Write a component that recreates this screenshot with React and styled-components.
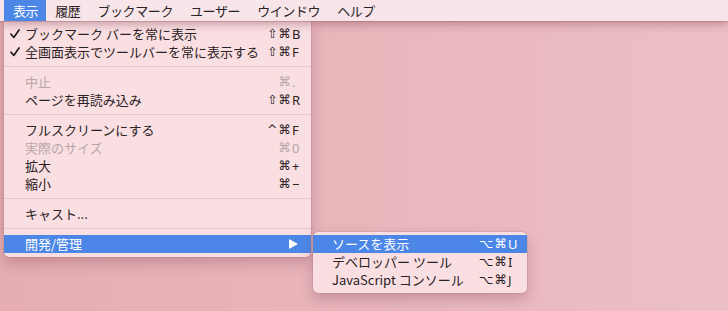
import React from 'react';
import styled, { createGlobalStyle } from 'styled-components';

const GlobalStyle = createGlobalStyle`
  html, body {
    margin: 0;
    padding: 0;
  }
  body {
    width: 728px;
    height: 311px;
    overflow: hidden;
    font-family: "Noto Sans CJK JP", "Noto Sans", "Liberation Sans", sans-serif;
    -webkit-font-smoothing: antialiased;
  }
`;

const topItems = ['表示', '履歴', 'ブックマーク', 'ユーザー', 'ウインドウ', 'ヘルプ'];

const viewMenu = [
  { label: 'ブックマーク バーを常に表示', mods: '⇧⌘', key: 'B', checked: true },
  { label: '全画面表示でツールバーを常に表示する', mods: '⇧⌘', key: 'F', checked: true },
  { sep: true },
  { label: '中止', mods: '⌘', key: '.', disabled: true },
  { label: 'ページを再読み込み', mods: '⇧⌘', key: 'R' },
  { sep: true },
  { label: 'フルスクリーンにする', mods: '^⌘', key: 'F' },
  { label: '実際のサイズ', mods: '⌘', key: '0', disabled: true },
  { label: '拡大', mods: '⌘', key: '+' },
  { label: '縮小', mods: '⌘', key: '−' },
  { sep: true },
  { label: 'キャスト...' },
  { sep: true },
  { label: '開発/管理', submenu: true, active: true },
];

const devMenu = [
  { label: 'ソースを表示', mods: '⌥⌘', key: 'U', active: true },
  { label: 'デベロッパー ツール', mods: '⌥⌘', key: 'I' },
  { label: 'JavaScript コンソール', mods: '⌥⌘', key: 'J' },
];

const Desktop = styled.div`
  position: relative;
  width: 728px;
  height: 311px;
  background: linear-gradient(to right, #e5adb1 0%, #e9b6bc 50%, #ecbfc6 100%);
`;

const MenuBar = styled.div`
  position: relative;
  z-index: 2;
  display: flex;
  height: 21px;
  padding-left: 4px;
  background: #f7e5e9;
  box-shadow: 0 1px 0 rgba(150, 90, 100, 0.3), 0 3px 10px rgba(130, 70, 85, 0.45);
`;

const BarItem = styled.div`
  display: flex;
  align-items: center;
  padding: 0 8px 0 9px;
  font-size: 13px;
  letter-spacing: -0.4px;
  color: ${p => (p.$active ? '#fff' : '#2a2224')};
  background: ${p => (p.$active ? '#4c87e8' : 'transparent')};
`;

const Dropdown = styled.div`
  position: absolute;
  left: ${p => p.$left}px;
  top: ${p => p.$top}px;
  width: ${p => p.$width}px;
  padding: ${p => p.$padTop}px 0 4px;
  background: #fadfe2;
  border-radius: ${p => (p.$sub ? '5px' : '0 0 5px 5px')};
  box-shadow: 0 0 0 0.5px rgba(120, 70, 80, 0.25), 0 6px 14px rgba(120, 60, 75, 0.3);
  z-index: ${p => (p.$sub ? 3 : 1)};
`;

const Row = styled.div`
  position: relative;
  display: flex;
  align-items: center;
  height: 18px;
  padding: 0 ${p => p.$padRight}px 0 ${p => p.$padLeft}px;
  font-size: 13px;
  line-height: 18px;
  white-space: nowrap;
  color: ${p => (p.$active ? '#fff' : p.$disabled ? '#b9a6a9' : '#2a2224')};
  background: ${p => (p.$active ? '#4c87e8' : 'transparent')};
`;

const Label = styled.span`
  flex: 1;
`;

const Check = styled.svg`
  position: absolute;
  left: 6px;
  top: 4px;
`;

const Shortcut = styled.span`
  display: flex;
  align-items: center;
  font-family: "DejaVu Sans", "Noto Sans", sans-serif;
  font-size: 12.5px;
`;

const Mods = styled.span`
  letter-spacing: 1px;
`;

const Key = styled.span`
  display: inline-block;
  min-width: 10px;
  text-align: left;
  font-family: "Noto Sans", sans-serif;
  font-size: 13px;
`;

const Arrow = styled.svg`
  margin-right: 4px;
`;

const Separator = styled.div`
  height: 1px;
  margin: 5px 0 6px;
  background: #e8c9cd;
`;

const CheckMark = () => (
  <Check width="10" height="10" viewBox="0 0 10 10">
    <path d="M1 5.2 L3.8 8.4 L9 1" fill="none" stroke="#231c1e" strokeWidth="1.7" strokeLinecap="round" strokeLinejoin="round" />
  </Check>
);

const MenuRows = ({ items, padLeft, padRight }) =>
  items.map((item, i) =>
    item.sep ? (
      <Separator key={i} />
    ) : (
      <Row key={i} $active={item.active} $disabled={item.disabled} $padLeft={padLeft} $padRight={padRight}>
        {item.checked && <CheckMark />}
        <Label>{item.label}</Label>
        {item.key && (
          <Shortcut>
            <Mods>{item.mods}</Mods>
            <Key>{item.key}</Key>
          </Shortcut>
        )}
        {item.submenu && (
          <Arrow width="9" height="10" viewBox="0 0 9 10">
            <path d="M0 0 L9 5 L0 10 Z" fill="#fff" />
          </Arrow>
        )}
      </Row>
    )
  );

export default function App() {
  return (
    <>
      <GlobalStyle />
      <Desktop>
        <MenuBar>
          {topItems.map((t, i) => (
            <BarItem key={t} $active={i === 0}>
              {t}
            </BarItem>
          ))}
        </MenuBar>
        <Dropdown $left={4} $top={21} $width={307} $padTop={4}>
          <MenuRows items={viewMenu} padLeft={21} padRight={9} />
        </Dropdown>
        <Dropdown $sub $left={313} $top={232} $width={214} $padTop={3}>
          <MenuRows items={devMenu} padLeft={19} padRight={9} />
        </Dropdown>
      </Desktop>
    </>
  );
}
